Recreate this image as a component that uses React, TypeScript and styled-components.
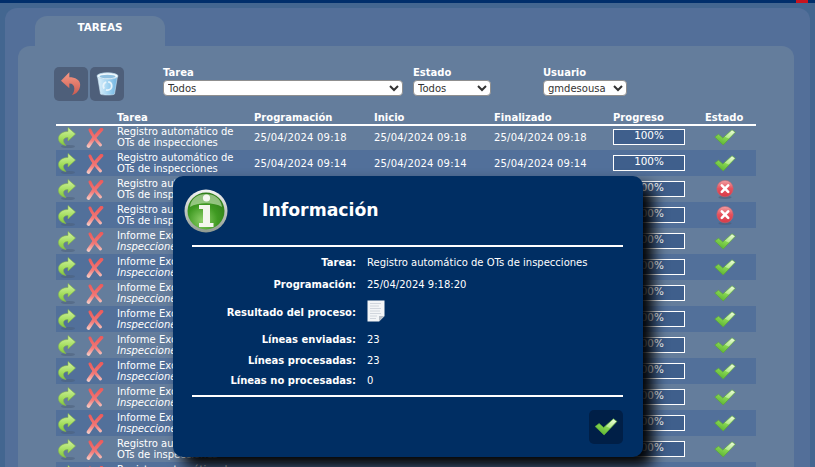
import styled, { createGlobalStyle } from 'styled-components';

const GlobalStyle = createGlobalStyle`
  html, body {
    margin: 0;
    padding: 0;
    height: 467px;
    overflow: hidden;
    background: #436690;
  }
  * {
    box-sizing: border-box;
  }
`;

const Page = styled.div`
  position: relative;
  width: 815px;
  height: 467px;
  overflow: hidden;
  background: #436690;
  color: #fff;
  font-family: 'DejaVu Sans', Verdana, sans-serif;
  font-size: 10px;
`;

const TopBar = styled.div`
  height: 3px;
  background: #002e6b;
`;

const CloseMark = styled.div`
  position: absolute;
  top: 0;
  right: 7px;
  width: 12px;
  height: 3px;
  background: #c8141e;
`;

const OuterPanel = styled.div`
  margin: 5px 5px 0;
  padding-top: 8px;
  height: 600px;
  background: #536f99;
  border-radius: 12px 12px 0 0;
`;

const Tab = styled.div`
  margin-left: 30px;
  width: 130px;
  height: 30px;
  padding-top: 5px;
  background: #647d9c;
  border-radius: 12px 12px 0 0;
  text-align: center;
  font-weight: bold;
  font-size: 10.4px;
  line-height: 12px;
`;

const InnerPanel = styled.div`
  margin: 0 16px 0 13px;
  padding: 21px 0 0 36px;
  height: 560px;
  background: #647d9c;
  border-radius: 12px 12px 0 0;
`;

const Toolbar = styled.div`
  display: flex;
  align-items: flex-start;
  height: 44px;
`;

const ToolGroup = styled.div`
  display: flex;
  gap: 2px;
`;

const ToolButton = styled.button<{ $dark?: boolean }>`
  display: flex;
  align-items: center;
  justify-content: center;
  width: 34px;
  height: 34px;
  padding: 0;
  border: 0;
  border-radius: 5px;
  background: ${(p) => (p.$dark ? '#001f47' : '#4e5f7a')};
`;

const Filter = styled.label<{ $gap: number }>`
  display: flex;
  flex-direction: column;
  margin-left: ${(p) => p.$gap}px;
  font-weight: bold;
  line-height: 11px;
`;

const FilterSelect = styled.select<{ $width: number }>`
  width: ${(p) => p.$width}px;
  height: 16px;
  margin-top: 2px;
  padding: 0;
  border: 1px solid #8f8f8f;
  border-radius: 4px;
  background-color: #fff;
  color: #333;
  font-family: 'DejaVu Sans', Verdana, sans-serif;
  font-size: 10px;
`;

const columns = '28px 33px 137px 120px 120px 119px 92px 40px';

const TableHead = styled.div`
  position: relative;
  z-index: 1;
  display: grid;
  grid-template-columns: ${columns};
  margin-left: 2px;
  margin-bottom: -2px;
  width: 700px;
  height: 15px;
  border-bottom: 2px solid #fff;
  font-weight: bold;
  line-height: 13px;
`;

const HeadCell = styled.div`
  white-space: nowrap;
`;

const Row = styled.div<{ $striped: boolean }>`
  display: grid;
  grid-template-columns: ${columns};
  align-items: center;
  margin-left: 2px;
  width: 700px;
  height: 26px;
  background: ${(p) => (p.$striped ? '#52709a' : 'transparent')};
`;

const ActionCell = styled.div`
  display: flex;
  padding: 1px 0 0 2px;
`;

const StatusCell = styled.div`
  display: flex;
  justify-content: center;
  padding-top: 1px;
`;

const TaskName = styled.div`
  line-height: 11px;
  white-space: nowrap;
`;

const TaskDetail = styled.div<{ $italic: boolean }>`
  font-style: ${(p) => (p.$italic ? 'italic' : 'normal')};
`;

const DateCell = styled.div`
  padding-top: 1px;
  letter-spacing: 0.2px;
  white-space: nowrap;
`;

const ProgressBox = styled.div`
  width: 72px;
  height: 16px;
  border: 1px solid #fff;
  background: #3f5f8c;
  text-align: center;
  font-size: 10.4px;
  line-height: 10px;
`;

const Modal = styled.div`
  position: absolute;
  left: 173px;
  top: 176px;
  z-index: 5;
  display: flex;
  flex-direction: column;
  width: 470px;
  height: 281px;
  padding: 0 20px 0 19px;
  background: #002e63;
  border-radius: 10px;
  box-shadow: 10px 10px 15px #000;
`;

const ModalHeader = styled.div`
  display: flex;
  align-items: center;
  height: 69px;
  margin-left: -8px;
`;

const ModalTitle = styled.h2`
  margin: 0 0 2px 34px;
  font-size: 17.3px;
  font-weight: bold;
  line-height: 20px;
`;

const Divider = styled.div`
  height: 2px;
  flex-shrink: 0;
  background: #fff;
`;

const InfoList = styled.div`
  display: flex;
  flex-direction: column;
  padding-top: 4px;
  height: 148px;
`;

const InfoRow = styled.div<{ $height: number }>`
  display: grid;
  grid-template-columns: 164px 1fr;
  column-gap: 11px;
  align-items: center;
  height: ${(p) => p.$height}px;
`;

const InfoLabel = styled.div`
  text-align: right;
  font-weight: bold;
  white-space: nowrap;
`;

const InfoValue = styled.div`
  white-space: nowrap;
`;

const ModalFooter = styled.div`
  display: flex;
  justify-content: flex-end;
  padding-top: 13px;
`;

const SharedDefs = styled.svg`
  position: absolute;
  width: 0;
  height: 0;
`;

const Defs = () => (
  <SharedDefs aria-hidden='true'>
    <defs>
      <linearGradient id='greenArrow' x1='0' y1='0' x2='0' y2='1'>
        <stop offset='0' stopColor='#d6f3a6' />
        <stop offset='0.55' stopColor='#a6df62' />
        <stop offset='1' stopColor='#82c63e' />
      </linearGradient>
      <linearGradient id='redArrow' x1='0' y1='0' x2='0' y2='1'>
        <stop offset='0' stopColor='#f79a86' />
        <stop offset='1' stopColor='#c95a50' />
      </linearGradient>
      <linearGradient id='redCross' gradientUnits='userSpaceOnUse' x1='0' y1='0' x2='0' y2='20'>
        <stop offset='0' stopColor='#ec5858' />
        <stop offset='0.6' stopColor='#f27a78' />
        <stop offset='1' stopColor='#f7d6cf' />
      </linearGradient>
      <linearGradient id='greenCheck' x1='0.2' y1='1' x2='0.8' y2='0'>
        <stop offset='0' stopColor='#58b030' />
        <stop offset='0.5' stopColor='#86d650' />
        <stop offset='0.55' stopColor='#b4ea8c' />
        <stop offset='1' stopColor='#eafbd8' />
      </linearGradient>
      <linearGradient id='redBall' x1='0' y1='0' x2='0' y2='1'>
        <stop offset='0' stopColor='#f0a0a4' />
        <stop offset='0.5' stopColor='#e6505c' />
        <stop offset='1' stopColor='#d83a48' />
      </linearGradient>
      <radialGradient id='greenBall' cx='0.4' cy='0.75' r='0.75'>
        <stop offset='0' stopColor='#8fd06a' />
        <stop offset='0.55' stopColor='#3f9a22' />
        <stop offset='1' stopColor='#2f7d18' />
      </radialGradient>
      <linearGradient id='ballRing' x1='0' y1='0' x2='0' y2='1'>
        <stop offset='0' stopColor='#f4f4f4' />
        <stop offset='1' stopColor='#8f9a90' />
      </linearGradient>
      <linearGradient id='bin' x1='0' y1='0' x2='1' y2='0'>
        <stop offset='0' stopColor='#dff1fb' />
        <stop offset='0.5' stopColor='#a5d5f2' />
        <stop offset='1' stopColor='#6fb2e0' />
      </linearGradient>
    </defs>
  </SharedDefs>
);

const GreenArrow = () => (
  <svg width='18' height='22' viewBox='0 0 18 22'>
    <ellipse cx='10' cy='19.5' rx='7' ry='1.6' fill='#4a5d78' opacity='0.5' />
    <path
      d='M10 0.5 L17.5 7 L10 14 V10.5 C7 10.5 5 12 5.5 14.5 C5.8 16 7 17.5 8 18.5 C4 18 0.5 15.5 0.5 11.5 C0.5 7.5 4.5 4.5 10 4.5 Z'
      fill='url(#greenArrow)'
      stroke='#86b84a'
      strokeWidth='0.6'
    />
  </svg>
);

const RedCross = () => (
  <svg width='18' height='20' viewBox='0 0 18 20'>
    <g fill='none' stroke='url(#redCross)' strokeLinecap='round'>
      <path d='M4 2 C6 7 10 12 14.5 17' strokeWidth='3' />
      <path d='M15.5 1.5 C11 6 6 12 2.5 18' strokeWidth='3.6' />
    </g>
  </svg>
);

const Check = ({ w = 22, h = 17 }: { w?: number; h?: number }) => (
  <svg width={w} height={h} viewBox='0 0 22 17'>
    <path
      d='M0.8 8 L4.5 5.2 L8.8 9 L18 0.8 L21.3 3.2 L9.2 16 Z'
      fill='url(#greenCheck)'
      stroke='#5aa838'
      strokeWidth='0.7'
      strokeLinejoin='round'
    />
  </svg>
);

const ErrorBall = () => (
  <svg width='18' height='19' viewBox='0 0 18 19'>
    <ellipse cx='9' cy='17.4' rx='6.5' ry='1.5' fill='#4a5d78' opacity='0.6' />
    <circle cx='9' cy='8.6' r='8.2' fill='url(#redBall)' stroke='#c9646c' strokeWidth='0.5' />
    <path d='M5.8 5.4 L12.2 11.8 M12.2 5.4 L5.8 11.8' stroke='#fff' strokeWidth='2.6' strokeLinecap='round' />
  </svg>
);

const BackArrow = () => (
  <svg width='20' height='24' viewBox='0 0 24 28'>
    <path
      d='M10 0 L0 10 L10 19 V13.5 C14 13.5 16 16 16 19.5 C16 22.5 15 25 13 27.5 C19 26 23 21 23 15 C23 9 17 6 10 6 Z'
      fill='url(#redArrow)'
    />
  </svg>
);

const TrashBin = () => (
  <svg width='23' height='24' viewBox='0 0 23 24'>
    <path d='M1.5 4 L4.5 22 C4.7 23.3 18.3 23.3 18.5 22 L21.5 4 Z' fill='url(#bin)' stroke='#cfe6f5' strokeWidth='0.6' />
    <ellipse cx='11.5' cy='4' rx='10.5' ry='3.2' fill='#f1f9fd' stroke='#b9d7ea' strokeWidth='0.8' />
    <ellipse cx='11.5' cy='4.5' rx='8' ry='1.8' fill='#8fc0e0' />
    <circle cx='11.5' cy='14' r='4.2' fill='none' stroke='#e8f4fb' strokeWidth='1.8' strokeDasharray='8 2' />
  </svg>
);

const InfoBall = () => (
  <svg width='44' height='44' viewBox='0 0 44 44'>
    <circle cx='22' cy='22' r='21.5' fill='url(#ballRing)' />
    <circle cx='22' cy='22' r='18.5' fill='url(#greenBall)' />
    <path d='M6 18 C7 9 14 5 22 5 C30 5 37 9 38 18 C30 13 14 13 6 18 Z' fill='#dff2d0' opacity='0.55' />
    <circle cx='22.5' cy='9' r='3.6' fill='#f6f8f2' />
    <path d='M15 16 H26 V34 H29.5 V38 H15 V34 H19 V20 H15 Z' fill='#f4f6ee' />
  </svg>
);

const DocIcon = () => (
  <svg width='18' height='22' viewBox='0 0 18 22'>
    <path d='M0.5 0.5 H17.5 V16 L12 21.5 H0.5 Z' fill='#f3f5f7' />
    <path d='M12 21.5 V16 H17.5 Z' fill='#b9c0c8' />
    <path
      d='M3 3.5 H14 M3 6 H12 M3 8.5 H14 M3 11 H13 M3 13.5 H14 M3 16 H10 M3 18.5 H9'
      stroke='#c8ced6'
      strokeWidth='0.8'
    />
  </svg>
);

interface ITask {
  name: string;
  detail: string;
  italic: boolean;
  date: string;
  ok: boolean;
}

const registro = (date: string, ok: boolean): ITask => ({
  name: 'Registro automático de',
  detail: 'OTs de inspecciones',
  italic: false,
  date,
  ok,
});

const informe = (date: string): ITask => ({
  name: 'Informe Excel de',
  detail: 'Inspecciones',
  italic: true,
  date,
  ok: true,
});

const tasks: ITask[] = [
  registro('25/04/2024 09:18', true),
  registro('25/04/2024 09:14', true),
  registro('25/04/2024 09:10', false),
  registro('25/04/2024 09:06', false),
  informe('25/04/2024 09:02'),
  informe('25/04/2024 08:58'),
  informe('25/04/2024 08:54'),
  informe('25/04/2024 08:50'),
  informe('25/04/2024 08:46'),
  informe('25/04/2024 08:42'),
  informe('25/04/2024 08:38'),
  informe('25/04/2024 08:34'),
  registro('25/04/2024 08:30', true),
  registro('25/04/2024 08:26', true),
];

const App = () => {
  return (
    <Page>
      <GlobalStyle />
      <Defs />
      <TopBar />
      <CloseMark />
      <OuterPanel>
        <Tab>TAREAS</Tab>
        <InnerPanel>
          <Toolbar>
            <ToolGroup>
              <ToolButton>
                <BackArrow />
              </ToolButton>
              <ToolButton>
                <TrashBin />
              </ToolButton>
            </ToolGroup>
            <Filter $gap={39}>
              Tarea
              <FilterSelect $width={240} defaultValue='Todos'>
                <option>Todos</option>
              </FilterSelect>
            </Filter>
            <Filter $gap={10}>
              Estado
              <FilterSelect $width={78} defaultValue='Todos'>
                <option>Todos</option>
              </FilterSelect>
            </Filter>
            <Filter $gap={52}>
              Usuario
              <FilterSelect $width={84} defaultValue='gmdesousa'>
                <option>gmdesousa</option>
              </FilterSelect>
            </Filter>
          </Toolbar>

          <TableHead>
            <HeadCell />
            <HeadCell />
            <HeadCell>Tarea</HeadCell>
            <HeadCell>Programación</HeadCell>
            <HeadCell>Inicio</HeadCell>
            <HeadCell>Finalizado</HeadCell>
            <HeadCell>Progreso</HeadCell>
            <HeadCell>Estado</HeadCell>
          </TableHead>

          {tasks.map((task, index) => (
            <Row key={index} $striped={index % 2 === 1}>
              <ActionCell>
                <GreenArrow />
              </ActionCell>
              <ActionCell>
                <RedCross />
              </ActionCell>
              <TaskName>
                {task.name}
                <TaskDetail $italic={task.italic}>{task.detail}</TaskDetail>
              </TaskName>
              <DateCell>{task.date}</DateCell>
              <DateCell>{task.date}</DateCell>
              <DateCell>{task.date}</DateCell>
              <ProgressBox>100%</ProgressBox>
              <StatusCell>{task.ok ? <Check /> : <ErrorBall />}</StatusCell>
            </Row>
          ))}
        </InnerPanel>
      </OuterPanel>

      <Modal>
        <ModalHeader>
          <InfoBall />
          <ModalTitle>Información</ModalTitle>
        </ModalHeader>
        <Divider />
        <InfoList>
          <InfoRow $height={22}>
            <InfoLabel>Tarea:</InfoLabel>
            <InfoValue>Registro automático de OTs de inspecciones</InfoValue>
          </InfoRow>
          <InfoRow $height={22}>
            <InfoLabel>Programación:</InfoLabel>
            <InfoValue>25/04/2024 9:18:20</InfoValue>
          </InfoRow>
          <InfoRow $height={34}>
            <InfoLabel>Resultado del proceso:</InfoLabel>
            <InfoValue>
              <DocIcon />
            </InfoValue>
          </InfoRow>
          <InfoRow $height={21}>
            <InfoLabel>Líneas enviadas:</InfoLabel>
            <InfoValue>23</InfoValue>
          </InfoRow>
          <InfoRow $height={20}>
            <InfoLabel>Líneas procesadas:</InfoLabel>
            <InfoValue>23</InfoValue>
          </InfoRow>
          <InfoRow $height={21}>
            <InfoLabel>Líneas no procesadas:</InfoLabel>
            <InfoValue>0</InfoValue>
          </InfoRow>
        </InfoList>
        <Divider />
        <ModalFooter>
          <ToolButton $dark>
            <Check w={24} h={18} />
          </ToolButton>
        </ModalFooter>
      </Modal>
    </Page>
  );
};

export default App;
